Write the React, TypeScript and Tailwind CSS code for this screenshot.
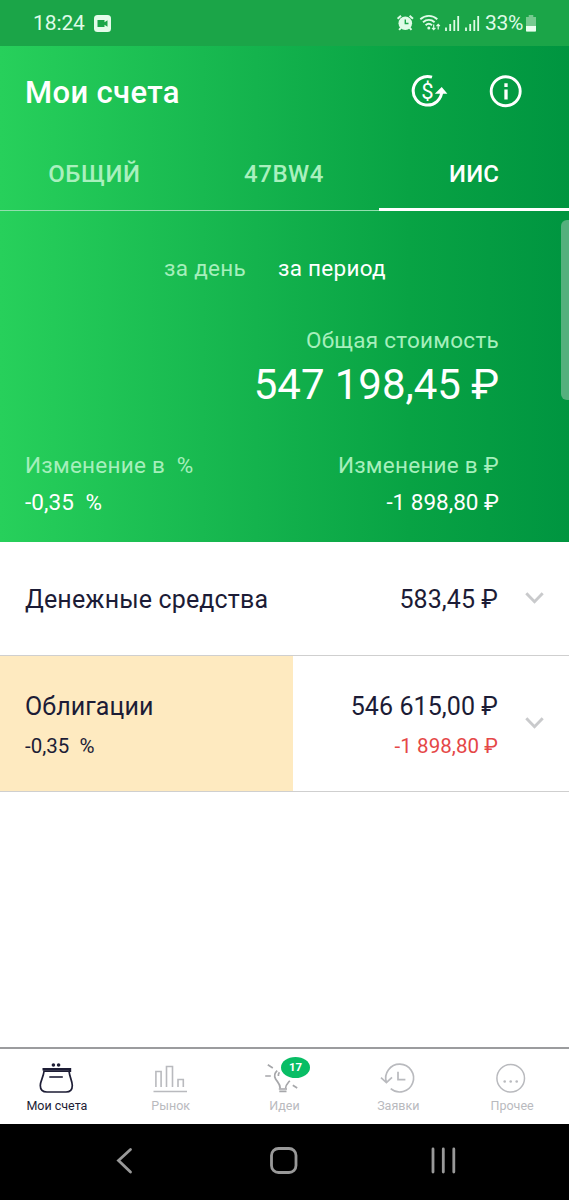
import type { ReactNode } from 'react';

const tabs = ['ОБЩИЙ', '47BW4', 'ИИС'];
const activeTab = 'ИИС';

function StatusBar() {
  return (
    <div className="flex h-[46px] items-center justify-between bg-[#1ba548] pl-[33px] pr-[33px] text-[#dffbe7]">
      <div className="flex items-center gap-[9px]">
        <span className="text-[21px] leading-[46px] tracking-[-0.1px]">18:24</span>
        <svg width="17" height="17" viewBox="0 0 17 17">
          <rect width="17" height="17" rx="3.5" fill="#e4fbea" />
          <path d="M3.5 5h7v2.2l3-2v6.6l-3-2V12h-7z" fill="#1ba548" />
        </svg>
      </div>
      <div className="flex items-center">
        <svg width="86" height="18" viewBox="394 14 86 18" fill="none" stroke="currentColor">
          {/* alarm */}
          <circle cx="403.3" cy="23.3" r="6.8" fill="currentColor" stroke="none" />
          <path d="M403.3 19.5v4h3.2" stroke="#1ba548" strokeWidth="1.4" />
          <path d="M395.6 18.8l3.4-3M411 18.8l-3.4-3M399.1 27.6l-2 2.2M407.5 27.6l2 2.2" strokeWidth="2" />
          {/* wifi */}
          <path d="M418.3 19.2c5-4.4 12.2-4.4 17 0M421 22.3c3.5-3 8.2-3 11.6 0M423.6 25.2c2-1.7 4.4-1.7 6.4 0" strokeWidth="1.9" />
          <circle cx="426.8" cy="28" r="1.5" fill="currentColor" stroke="none" />
          <path d="M431.7 24.5v5M430 27.8l1.7 1.8 1.7-1.8M436.2 29.5v-5M434.5 26.2l1.7-1.8 1.7 1.8" strokeWidth="1.2" />
          {/* signal */}
          <path d="M444 27.5V31M448.2 24V31M452.3 20V31M456.2 16V31" strokeWidth="1.8" />
          <path d="M464 27.5V31M468.2 24V31M472.3 20V31M476.2 16V31" strokeWidth="1.8" />
        </svg>
        <span className="ml-[3px] text-[21px] leading-[46px] tracking-[-0.3px]">33%</span>
        <svg className="ml-[3px]" width="10" height="17" viewBox="0 0 11 17" preserveAspectRatio="none">
          <path d="M3 0h5v2h3v14.5H0V2h3z" fill="#76ca90" />
          <path d="M0 11h11v4.5a1 1 0 0 1-1 1H1a1 1 0 0 1-1-1z" fill="#eafff0" />
        </svg>
      </div>
    </div>
  );
}

function TitleBar() {
  return (
    <div className="flex h-[94px] items-center justify-between pl-[25px] pr-[47px]">
      <h1 className="text-[31px] font-medium leading-[94px] tracking-[0.35px]">Мои счета</h1>
      <div className="flex items-center gap-[41px] pb-[4px]">
        <svg width="37" height="34" viewBox="0 0 37 34" fill="none" stroke="white">
          <path d="M21 3.2A14.3 14.3 0 1 0 30.8 17" strokeWidth="3" />
          <path d="M23.8 19.8L30.7 13L36.4 19.8z" fill="white" stroke="none" />
          <text x="16.5" y="24.6" textAnchor="middle" fontSize="22" fill="white" stroke="none" fontFamily="Roboto">$</text>
        </svg>
        <svg width="33" height="33" viewBox="0 0 33 33" fill="none" stroke="white">
          <circle cx="16.7" cy="16.2" r="14.5" strokeWidth="2.9" />
          <path d="M17 14.6V24.5M17 8.3v3.6" strokeWidth="3.3" />
        </svg>
      </div>
    </div>
  );
}

function Tabs() {
  return (
    <div className="grid h-[71px] grid-cols-3">
      {tabs.map((tab) => (
        <div
          key={tab}
          className={
            tab === activeTab
              ? 'border-b-[3px] border-white text-center text-[24px] font-medium leading-[68px] tracking-[0.2px] text-white'
              : 'border-b border-[#92dfae] pr-[1px] text-center text-[24px] font-medium leading-[68px] tracking-[0.55px] text-[#a9f0be]'
          }
        >
          {tab}
        </div>
      ))}
    </div>
  );
}

function Summary() {
  return (
    <div className="flex h-[331px] flex-col pl-[25px] pr-[70px]">
      <div className="mt-[41px] flex justify-center gap-[32px] pl-[26px] text-[22.5px] leading-[32px] tracking-[0.28px]">
        <span className="text-[#a6efbc]">за день</span>
        <span>за период</span>
      </div>
      <div className="mt-[40px] text-right text-[22.5px] leading-[32px] tracking-[0.28px] text-[#a6efbc]">Общая стоимость</div>
      <div className="mt-px text-right text-[42px] leading-[56px] tracking-[-0.05px]">547 198,45 ₽</div>
      <div className="mt-[36px] flex justify-between whitespace-pre text-[22.5px] leading-[32px] tracking-[0.25px] text-[#a6efbc]">
        <span>{'Изменение в  %'}</span>
        <span>Изменение в ₽</span>
      </div>
      <div className="mt-[5px] flex justify-between whitespace-pre text-[22.5px] leading-[32px]">
        <span className="tracking-[0.1px]">{'-0,35  %'}</span>
        <span>-1 898,80 ₽</span>
      </div>
    </div>
  );
}

function Chevron() {
  return (
    <svg className="ml-[27px] mr-px shrink-0" width="19" height="13" viewBox="0 0 19 13" fill="none">
      <path d="M1.3 1.2l8.2 8.5 8.2-8.5" stroke="#c9cacc" strokeWidth="2.9" />
    </svg>
  );
}

function NavItem({ label, active, children }: { label: string; active?: boolean; children: ReactNode }) {
  return (
    <div className={active ? 'flex flex-col items-center text-[#1d1d35]' : 'flex flex-col items-center text-[#b9babe]'}>
      <svg className="mt-[8px]" width="50" height="40" viewBox="0 0 50 40" fill="none" stroke="currentColor">
        {children}
      </svg>
      <span className="-mt-px text-[12.5px] leading-[20px]">{label}</span>
    </div>
  );
}

export default function App() {
  return (
    <div className="relative flex h-[1200px] w-[569px] flex-col overflow-hidden bg-white font-['Roboto',sans-serif]">
      <StatusBar />
      <header className="bg-[linear-gradient(90deg,#27d05b_0%,#14b34d_45%,#08a344_72%,#009540_100%)] text-white">
        <TitleBar />
        <Tabs />
        <Summary />
      </header>
      <div className="absolute right-0 top-[220px] h-[180px] w-[8px] rounded-l-[6px] bg-[#54b07d]" />

      <main className="flex-1 text-[#1c1c36]">
        <div className="flex h-[114px] items-center border-b border-[#cfcfcf] pl-[25px] pr-[24px] text-[25px]">
          <span className="flex-1 pt-[2px] tracking-[0.15px]">Денежные средства</span>
          <span className="pt-[2px] tracking-[0.08px]">583,45 ₽</span>
          <Chevron />
        </div>
        <div className="flex h-[136px] items-center border-b border-[#cfcfcf] pr-[24px]">
          <div className="h-full w-[293px] bg-[#feeac0] pl-[25px] pt-[33px]">
            <div className="text-[25px] leading-[36px] tracking-[0.08px]">Облигации</div>
            <div className="mt-[5px] whitespace-pre text-[20.5px] leading-[32px]">{'-0,35  %'}</div>
          </div>
          <div className="h-full flex-1 pt-[33px] text-right">
            <div className="text-[25px] leading-[36px] tracking-[0.08px]">546 615,00 ₽</div>
            <div className="mt-[5px] text-[20.5px] leading-[32px] tracking-[0.08px] text-[#e54747]">-1 898,80 ₽</div>
          </div>
          <Chevron />
        </div>
      </main>

      <nav className="grid h-[77px] grid-cols-5 border-t-2 border-[#9b9c9e]">
        <NavItem label="Мои счета" active>
          <g fill="currentColor" stroke="none">
            <circle cx="21.4" cy="8" r="1.8" />
            <circle cx="26.6" cy="8" r="1.8" />
          </g>
          <path d="M10.5 12.2h27.5v2.8" strokeWidth="2.4" />
          <path d="M12 14.2C11.5 20 8.3 24 8.3 28.5C8.3 33 11 35 15 35H34C38 35 40.3 33 40.3 28.5C40.3 24 37.6 20 37 14.2Z" strokeWidth="1.7" />
          <path d="M17.3 20h13.5" strokeWidth="1.6" />
        </NavItem>
        <NavItem label="Рынок">
          <path d="M9.9 30V14.5h5.2V30M20.5 30V9.5h6V30M32 30v-7.5h5.3V30M7.5 34.5H41" strokeWidth="1.6" />
        </NavItem>
        <NavItem label="Идеи">
          <g stroke="#a6a7aa" strokeWidth="1.7">
            <path d="M8.8 7.7l5 3.3M6.2 19h5.6M33.8 28.3l4.4 2.7" />
            <path d="M18.2 13.7C15.6 16 15.2 19.5 16.6 22C18.3 25 21.2 26.5 21.2 31.5" />
            <path d="M30.8 23.7C28.6 26.3 26.6 28 26.5 31.5M20.4 15.3c-.9 1.2-1.2 2.2-1 3.7" />
            <path d="M19.8 32h8.2M20.3 34.4h7.2" />
          </g>
        </NavItem>
        <NavItem label="Заявки">
          <path d="M13.4 25.3A13.9 13.9 0 1 1 17.7 31.7M8 20.7l5.4 5 5.6-5.4M25 14.7v8h7.4" strokeWidth="1.7" />
        </NavItem>
        <NavItem label="Прочее">
          <circle cx="23.7" cy="21.3" r="13.8" strokeWidth="1.5" />
          <g fill="currentColor" stroke="none">
            <circle cx="17.7" cy="24.5" r="1.3" />
            <circle cx="23.7" cy="24.5" r="1.3" />
            <circle cx="29.7" cy="24.5" r="1.3" />
          </g>
        </NavItem>
      </nav>
      <div className="absolute left-[281px] top-[1057px] flex h-[21px] w-[29px] items-center justify-center rounded-[50%] bg-[#08bd65] text-[11.5px] font-bold text-white">
        17
      </div>

      <footer className="h-[76px] bg-black">
        <svg width="569" height="76" viewBox="0 1124 569 76" fill="none" stroke="#999" strokeWidth="2.8" strokeLinecap="round">
          <path d="M130.5 1149.5l-12 11 12 11.5" />
          <rect x="271.5" y="1148.5" width="24.5" height="24" rx="7" />
          <path d="M433 1149v23M443.3 1149v23M453.8 1149v23" />
        </svg>
      </footer>
    </div>
  );
}
